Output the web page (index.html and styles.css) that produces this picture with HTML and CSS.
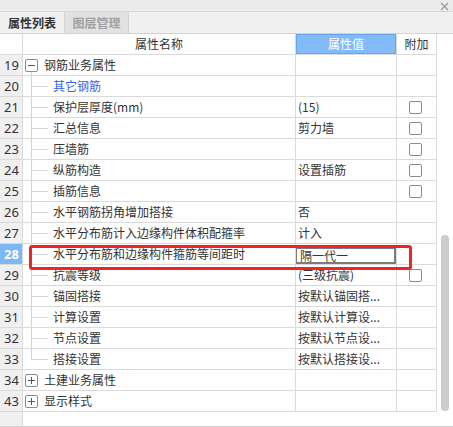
FILE: index.html
```html
<!DOCTYPE html>
<html lang="zh">
<head>
<meta charset="utf-8">
<link rel="stylesheet" href="styles.css">
</head>
<body>
<div class="panel">
  <div class="titlebar">
    <svg class="close" width="9" height="9" viewBox="0 0 9 9"><path d="M1 1L8 8M8 1L1 8" stroke="#9a9a9a" stroke-width="1.2" fill="none"/></svg>
  </div>
  <div class="tabs">
    <div class="tab active">属性列表</div>
    <div class="tab">图层管理</div>
  </div>
  <div class="body">
    <div class="grid">
      <div class="row head">
        <div class="c num"></div>
        <div class="c name center">属性名称</div>
        <div class="c val hl center">属性值</div>
        <div class="c add center">附加</div>
      </div>
      <div class="row">
        <div class="c num">19</div>
        <div class="c name group open"><span class="exp"><svg width="7" height="7" viewBox="0 0 7 7"><path d="M0 3.5H7" stroke="#555" stroke-width="1"/></svg></span><span class="t">钢筋业务属性</span></div>
        <div class="c val"></div>
        <div class="c add"></div>
      </div>
      <div class="row">
        <div class="c num">20</div>
        <div class="c name"><span class="br"></span><span class="t blue">其它钢筋</span></div>
        <div class="c val"></div>
        <div class="c add"></div>
      </div>
      <div class="row">
        <div class="c num">21</div>
        <div class="c name"><span class="br"></span><span class="t">保护层厚度(mm)</span></div>
        <div class="c val">(15)</div>
        <div class="c add"><span class="cb"></span></div>
      </div>
      <div class="row">
        <div class="c num">22</div>
        <div class="c name"><span class="br"></span><span class="t">汇总信息</span></div>
        <div class="c val">剪力墙</div>
        <div class="c add"><span class="cb"></span></div>
      </div>
      <div class="row">
        <div class="c num">23</div>
        <div class="c name"><span class="br"></span><span class="t">压墙筋</span></div>
        <div class="c val"></div>
        <div class="c add"><span class="cb"></span></div>
      </div>
      <div class="row">
        <div class="c num">24</div>
        <div class="c name"><span class="br"></span><span class="t">纵筋构造</span></div>
        <div class="c val">设置插筋</div>
        <div class="c add"><span class="cb"></span></div>
      </div>
      <div class="row">
        <div class="c num">25</div>
        <div class="c name"><span class="br"></span><span class="t">插筋信息</span></div>
        <div class="c val"></div>
        <div class="c add"><span class="cb"></span></div>
      </div>
      <div class="row">
        <div class="c num">26</div>
        <div class="c name"><span class="br"></span><span class="t">水平钢筋拐角增加搭接</span></div>
        <div class="c val">否</div>
        <div class="c add"></div>
      </div>
      <div class="row">
        <div class="c num">27</div>
        <div class="c name"><span class="br"></span><span class="t">水平分布筋计入边缘构件体积配箍率</span></div>
        <div class="c val">计入</div>
        <div class="c add"></div>
      </div>
      <div class="row">
        <div class="c num sel">28</div>
        <div class="c name"><span class="br"></span><span class="t">水平分布筋和边缘构件箍筋等间距时</span></div>
        <div class="c val"><div class="edit">隔一代一</div></div>
        <div class="c add"></div>
      </div>
      <div class="row">
        <div class="c num">29</div>
        <div class="c name"><span class="br"></span><span class="t">抗震等级</span></div>
        <div class="c val">(三级抗震)</div>
        <div class="c add"><span class="cb"></span></div>
      </div>
      <div class="row">
        <div class="c num">30</div>
        <div class="c name"><span class="br"></span><span class="t">锚固搭接</span></div>
        <div class="c val">按默认锚固搭...</div>
        <div class="c add"></div>
      </div>
      <div class="row">
        <div class="c num">31</div>
        <div class="c name"><span class="br"></span><span class="t">计算设置</span></div>
        <div class="c val">按默认计算设...</div>
        <div class="c add"></div>
      </div>
      <div class="row">
        <div class="c num">32</div>
        <div class="c name"><span class="br"></span><span class="t">节点设置</span></div>
        <div class="c val">按默认节点设...</div>
        <div class="c add"></div>
      </div>
      <div class="row">
        <div class="c num">33</div>
        <div class="c name"><span class="br last"></span><span class="t">搭接设置</span></div>
        <div class="c val">按默认搭接设...</div>
        <div class="c add"></div>
      </div>
      <div class="row">
        <div class="c num">34</div>
        <div class="c name group"><span class="exp"><svg width="7" height="7" viewBox="0 0 7 7"><path d="M0 3.5H7M3.5 0V7" stroke="#555" stroke-width="1"/></svg></span><span class="t">土建业务属性</span></div>
        <div class="c val"></div>
        <div class="c add"></div>
      </div>
      <div class="row">
        <div class="c num">43</div>
        <div class="c name group"><span class="exp"><svg width="7" height="7" viewBox="0 0 7 7"><path d="M0 3.5H7M3.5 0V7" stroke="#555" stroke-width="1"/></svg></span><span class="t">显示样式</span></div>
        <div class="c val"></div>
        <div class="c add"></div>
      </div>
      <div class="filler">
        <div class="fnum"></div>
      </div>
    </div>
    <div class="scroll"><div class="thumb"></div></div>
  </div>
  <div class="redbox"></div>
</div>
</body>
</html>
```

FILE: styles.css
```css
html, body {
  margin: 0;
  padding: 0;
  background: #ffffff;
}
body {
  font-family: "Noto Sans CJK SC", "Noto Sans", sans-serif;
  font-size: 12px;
  color: #333333;
}
.panel {
  position: relative;
  width: 453px;
  height: 427px;
  display: flex;
  flex-direction: column;
  overflow: hidden;
}
.titlebar {
  height: 11px;
  background: #ebebeb;
  border-bottom: 1px solid #d6d6d6;
  display: flex;
  justify-content: flex-end;
  align-items: center;
  padding-right: 4px;
}
.close {
  display: block;
  margin-top: 1px;
}
.tabs {
  height: 21px;
  background: #f0f0f0;
  border-bottom: 1px solid #d2d2d2;
  display: flex;
}
.tab {
  width: 64px;
  box-sizing: border-box;
  border-right: 1px solid #d2d2d2;
  line-height: 21px;
  text-align: center;
  font-weight: bold;
  color: #a0a0a0;
  background: #e2e2e2;
}
.tab.active {
  color: #333333;
  background: #f0f0f0;
  width: 65px;
}
.body {
  flex: 1;
  display: flex;
  border-bottom: 1px solid #d2d2d2;
}
.grid {
  width: 437px;
  display: flex;
  flex-direction: column;
}
.row {
  display: flex;
  height: 20px;
  border-bottom: 1px solid #dadada;
}
.c {
  box-sizing: border-box;
  height: 20px;
  line-height: 20px;
  border-right: 1px solid #dadada;
  white-space: nowrap;
  overflow: hidden;
}
.num {
  width: 23px;
  background: #f0f0f0;
  text-align: center;
  font-family: "Noto Sans", sans-serif;
  font-size: 13px;
  color: #333333;
  padding-left: 1px;
}
.head .num {
  background: #ffffff;
}
.num.sel {
  background: #7db7f4;
  color: #ffffff;
  font-weight: bold;
}
.name {
  width: 273px;
  display: flex;
  align-items: center;
}
.val {
  width: 101px;
  padding-left: 2px;
}
.add {
  width: 40px;
  display: flex;
  align-items: center;
  padding-left: 12px;
}
.center {
  justify-content: center;
  text-align: center;
  padding-left: 0;
}
.hl {
  background: #82bbf7;
  color: #ffffff;
  box-shadow: inset 0 0 0 1px #66a6ee;
}
.group .exp {
  margin-left: 2px;
  width: 13px;
  height: 13px;
  box-sizing: border-box;
  border: 1px solid #8a8a8a;
  border-radius: 2px;
  background: #ffffff;
  display: flex;
  align-items: center;
  justify-content: center;
}
.group .exp svg {
  display: block;
}
.group .t {
  margin-left: 6px;
}
.group.open {
  background: linear-gradient(#d4d4d4, #d4d4d4) 8px 100% / 1px 50% no-repeat;
}
.br {
  margin-left: 8px;
  width: 17px;
  height: 20px;
  flex: none;
  background:
    linear-gradient(#d4d4d4, #d4d4d4) 0 0 / 1px 100% no-repeat,
    linear-gradient(#d4d4d4, #d4d4d4) 0 50% / 100% 1px no-repeat;
}
.br.last {
  background:
    linear-gradient(#d4d4d4, #d4d4d4) 0 0 / 1px 50% no-repeat,
    linear-gradient(#d4d4d4, #d4d4d4) 0 50% / 100% 1px no-repeat;
}
.br + .t {
  margin-left: 5px;
}
.blue {
  color: #3a62e2;
}
.cb {
  width: 13px;
  height: 13px;
  box-sizing: border-box;
  border: 1px solid #8c8c8c;
  border-radius: 2px;
  background: #ffffff;
}
.edit {
  margin-top: 3px;
  margin-left: -3px;
  height: 17px;
  box-sizing: border-box;
  border: 2px solid #7c7c7c;
  line-height: 13px;
  padding-left: 3px;
}
.filler {
  flex: 1;
  display: flex;
}
.fnum {
  width: 23px;
  box-sizing: border-box;
  background: #f0f0f0;
  border-right: 1px solid #dadada;
}
.scroll {
  flex: 1;
  padding-top: 201px;
  padding-left: 4px;
}
.thumb {
  width: 8px;
  height: 176px;
  border-radius: 4px;
  background: #cdcdcd;
}
.redbox {
  position: absolute;
  left: 29px;
  top: 245px;
  width: 383px;
  height: 25px;
  box-sizing: border-box;
  border: 3px solid #f02424;
  border-radius: 3px;
}
```
